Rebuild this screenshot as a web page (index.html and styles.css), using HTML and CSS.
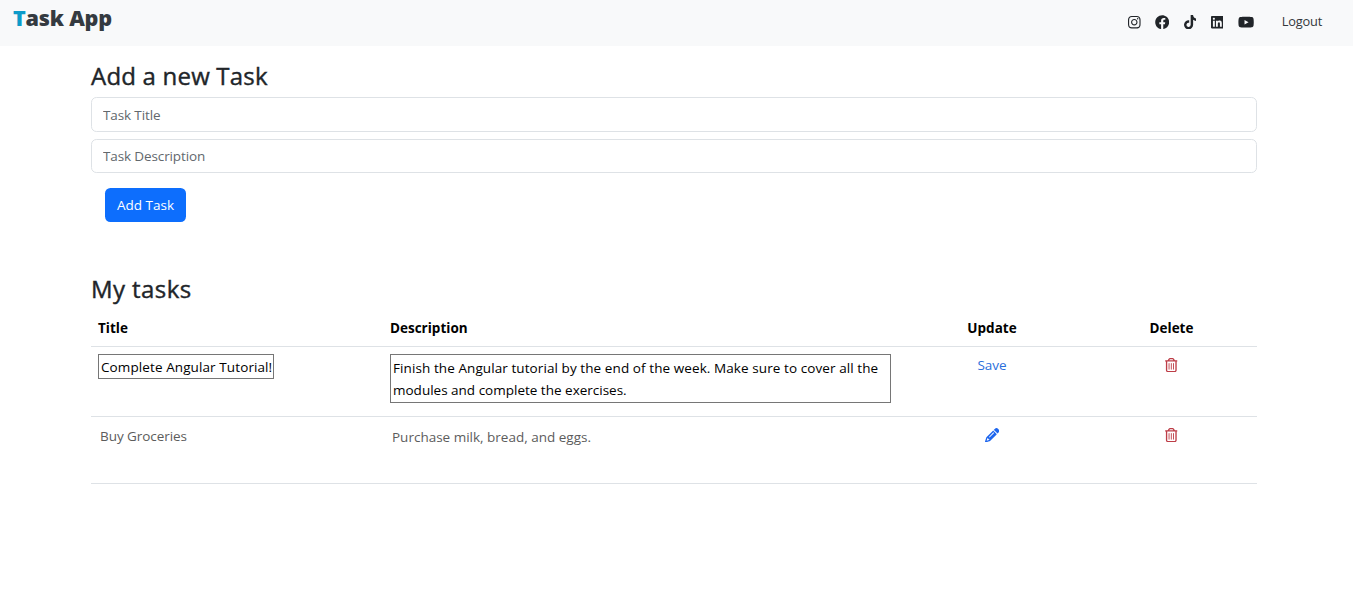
FILE: index.html
```html
<!DOCTYPE html>
<html lang="en">
<head>
<meta charset="utf-8">
<title>Task App</title>
<link rel="stylesheet" href="styles.css">
</head>
<body>
<svg class="sprite" aria-hidden="true">
  <symbol id="trash" viewBox="0 0 448 512"><path d="M170.5 51.6L151.5 80h145l-19-28.4c-1.500-2.200-4-3.600-6.700-3.600H177.100c-2.700 0-5.200 1.300-6.700 3.600zm147-26.600L354.200 80H424c13.300 0 24 10.700 24 24s-10.700 24-24 24h-8V432c0 44.200-35.800 80-80 80H112c-44.200 0-80-35.800-80-80V128H24c-13.300 0-24-10.700-24-24S10.700 80 24 80h69.800l36.700-55.100C140.900 9.400 158.400 0 177.100 0h93.700c18.700 0 36.200 9.400 46.600 24.900zM80 128V432c0 17.700 14.300 32 32 32H336c17.700 0 32-14.300 32-32V128H80zm80 64V400c0 8.800-7.200 16-16 16s-16-7.200-16-16V192c0-8.800 7.200-16 16-16s16 7.200 16 16zm80 0V400c0 8.800-7.200 16-16 16s-16-7.200-16-16V192c0-8.800 7.200-16 16-16s16 7.200 16 16zm80 0V400c0 8.800-7.200 16-16 16s-16-7.200-16-16V192c0-8.800 7.200-16 16-16s16 7.200 16 16z"/></symbol>
</svg>
<header class="navbar">
  <a class="brand"><span class="brand-initial">T</span>ask App</a>
  <nav class="nav-links">
    <svg class="icon" viewBox="0 0 448 512"><path d="M224.1 141c-63.6 0-114.9 51.3-114.9 114.9s51.3 114.9 114.9 114.9S339 319.500 339 255.900 287.700 141 224.100 141zm0 189.600c-41.100 0-74.700-33.500-74.700-74.700s33.500-74.700 74.700-74.700 74.700 33.500 74.700 74.700-33.600 74.700-74.700 74.700zm146.400-194.300c0 14.900-12 26.800-26.800 26.800-14.900 0-26.800-12-26.800-26.800s12-26.800 26.800-26.800 26.800 12 26.800 26.800zm76.100 27.200c-1.700-35.900-9.900-67.700-36.200-93.900-26.200-26.200-58-34.400-93.900-36.200-37-2.100-147.900-2.100-184.900 0-35.800 1.700-67.600 9.900-93.900 36.100s-34.400 58-36.200 93.900c-2.100 37-2.100 147.900 0 184.900 1.700 35.900 9.900 67.700 36.200 93.900s58 34.400 93.900 36.200c37 2.100 147.900 2.100 184.900 0 35.900-1.700 67.700-9.900 93.900-36.200 26.200-26.200 34.400-58 36.200-93.900 2.100-37 2.100-147.800 0-184.800zM398.800 388c-7.800 19.600-22.900 34.700-42.600 42.600-29.500 11.700-99.500 9-132.100 9s-102.700 2.600-132.100-9c-19.600-7.800-34.700-22.900-42.600-42.600-11.700-29.500-9-99.500-9-132.100s-2.600-102.700 9-132.100c7.800-19.600 22.900-34.700 42.600-42.600 29.500-11.700 99.500-9 132.100-9s102.700-2.600 132.100 9c19.600 7.800 34.700 22.900 42.600 42.600 11.700 29.500 9 99.500 9 132.100s2.700 102.700-9 132.100z"/></svg>
    <svg class="icon" viewBox="0 0 512 512"><path d="M504 256C504 119 393 8 256 8S8 119 8 256c0 123.780 90.690 226.380 209.250 245V327.690h-63V256h63v-54.640c0-62.150 37-96.480 93.670-96.480 27.140 0 55.520 4.840 55.520 4.840v61h-31.280c-30.800 0-40.410 19.120-40.410 38.730V256h68.780l-11 71.690h-57.780V501C413.310 482.380 504 379.780 504 256z"/></svg>
    <svg class="icon" viewBox="0 0 448 512"><path d="M448 209.910a210.060 210.060 0 0 1-122.770-39.250V349.380A162.550 162.550 0 1 1 185 188.310V278.200a74.620 74.620 0 1 0 52.230 71.180V0h88a121.180 121.180 0 0 0 1.860 22.170A122.180 122.180 0 0 0 381 102.390a121.430 121.430 0 0 0 67 20.140z"/></svg>
    <svg class="icon" viewBox="0 0 448 512"><path d="M416 32H31.900C14.300 32 0 46.500 0 64.300v383.400C0 465.500 14.300 480 31.900 480H416c17.600 0 32-14.500 32-32.300V64.300c0-17.800-14.400-32.300-32-32.300zM135.400 416H69V202.200h66.500V416zm-33.200-243c-21.300 0-38.500-17.300-38.500-38.500S80.900 96 102.200 96c21.200 0 38.500 17.300 38.500 38.500 0 21.300-17.200 38.500-38.500 38.500zm282.100 243h-66.400V312c0-24.800-.5-56.700-34.500-56.700-34.600 0-39.900 27-39.900 54.900V416h-66.400V202.200h63.700v29.200h.9c8.900-16.800 30.600-34.500 62.900-34.500 67.200 0 79.700 44.300 79.700 101.900V416z"/></svg>
    <svg class="icon" viewBox="0 0 576 512"><path d="M549.655 124.083c-6.281-23.650-24.787-42.276-48.284-48.597C458.781 64 288 64 288 64S117.220 64 74.629 75.486c-23.497 6.322-42.003 24.947-48.284 48.597-11.412 42.867-11.412 132.305-11.412 132.305s0 89.438 11.412 132.305c6.281 23.650 24.787 41.500 48.284 47.821C117.220 448 288 448 288 448s170.780 0 213.371-11.486c23.497-6.321 42.003-24.171 48.284-47.821 11.412-42.867 11.412-132.305 11.412-132.305s0-89.438-11.412-132.305zm-317.510 213.508V175.185l142.739 81.205-142.739 81.201z"/></svg>
    <a class="logout">Logout</a>
  </nav>
</header>
<main class="container">
  <h3 class="heading heading-add">Add a new Task</h3>
  <form class="task-form">
    <input class="field" type="text" placeholder="Task Title">
    <input class="field field-description" type="text" placeholder="Task Description">
    <button class="add-button" type="button">Add Task</button>
  </form>
  <h3 class="heading heading-list">My tasks</h3>
  <div class="table">
    <div class="row row-head">
      <div class="title-head">Title</div>
      <div class="description-head">Description</div>
      <div class="action update-head">Update</div>
      <div class="action delete-head">Delete</div>
    </div>
    <div class="row row-editing">
      <div><div class="edit edit-title">Complete Angular Tutorial!</div></div>
      <div><div class="edit edit-description"><span class="line line-one">Finish the Angular tutorial by the end of the week. Make sure to cover all the</span> <span class="line line-two">modules and complete the exercises.</span></div></div>
      <div class="action"><a class="save">Save</a></div>
      <div class="action"><svg class="icon trash"><use href="#trash"/></svg></div>
    </div>
    <div class="row row-idle">
      <div class="plain plain-title">Buy Groceries</div>
      <div class="plain plain-description">Purchase milk, bread, and eggs.</div>
      <div class="action"><svg class="icon pencil" viewBox="0 0 512 512"><path d="M410.300 231l11.300-11.300-33.900-33.900-62.100-62.100L291.700 89.800l-11.300 11.300-22.600 22.600L58.600 322.900c-10.400 10.400-18 23.300-22.200 37.400L1 480.700c-2.500 8.400-.2 17.500 6.100 23.700s15.300 8.500 23.700 6.100l120.300-35.400c14.100-4.200 27-11.800 37.400-22.200L387.700 253.700 410.300 231zM160 399.400l-9.100 22.700c-4 3.100-8.500 5.400-13.300 6.900L59.400 452l23-78.100c1.400-4.900 3.800-9.400 6.900-13.300l22.700-9.100v32c0 8.800 7.200 16 16 16h32zM362.700 18.700L348.300 33.200 325.700 55.800 314.300 67.100l33.900 33.900 62.100 62.100 33.900 33.900 11.300-11.300 22.600-22.600 14.500-14.500c25-25 25-65.500 0-90.500L453.300 18.700c-25-25-65.500-25-90.500 0zm-47.400 168l-144 144c-6.200 6.200-16.400 6.200-22.600 0s-6.200-16.400 0-22.600l144-144c6.200-6.200 16.400-6.200 22.600 0s6.200 16.400 0 22.600z"/></svg></div>
      <div class="action"><svg class="icon trash"><use href="#trash"/></svg></div>
    </div>
  </div>
</main>
</body>
</html>
```
FILE: styles.css
```css
* { box-sizing: border-box; }
body {
  margin: 0;
  background: #fff;
  color: #212529;
  font: 13.5px/22px "Segoe UI", "Open Sans", "Noto Sans", sans-serif;
}
.sprite { display: none; }
.icon { display: block; height: 14.4px; fill: currentColor; }
.navbar {
  display: flex;
  justify-content: space-between;
  height: 45.500px;
  padding: 0 31px 0 13px;
  background: #f8f9fa;
}
.brand { padding-top: 3px; font-size: 21.600px; line-height: 30px; font-weight: 800; color: #343a40; letter-spacing: -0.220px; }
.brand-initial { color: #0d9bc9; }
.nav-links { display: flex; align-items: center; gap: 14.400px; padding-bottom: 2px; }
.logout { margin-left: 13.500px; padding-bottom: 2px; font-size: 12.800px; letter-spacing: -0.200px; color: #33383c; }
.container { width: 1166px; margin: 0 0 0 91px; }
.heading { margin: 0; font-size: 24px; line-height: 30px; font-weight: 500; letter-spacing: 0.200px; -webkit-text-stroke: 0.400px currentColor; }
.heading-add { padding-top: 15px; }
.task-form { display: flex; flex-direction: column; align-items: flex-start; padding-top: 6.500px; }
.field {
  width: 100%;
  height: 35px;
  padding: 0 11px;
  border: 1px solid #dee2e6;
  border-radius: 5.400px;
  background: #fff;
  font: inherit;
  letter-spacing: -0.120px;
}
.field::placeholder { color: #62686d; opacity: 1; }
.field-description { height: 34px; margin-top: 7px; }
.add-button {
  width: 81px;
  height: 34px;
  margin: 15px 0 0 14px;
  padding: 0;
  border: 0;
  border-radius: 5.400px;
  background: #0d6efd;
  color: #fff;
  font: inherit;
}
.heading-list { margin-top: 52px; letter-spacing: 0.420px; }
.table { margin-top: 7px; }
.row {
  display: grid;
  grid-template-columns: 292px 518px 182px 174px;
  border-bottom: 1px solid #dee2e6;
}
.row > div { padding: 7px 7px 0; }
.row-head { height: 36px; font-weight: 700; color: #000; }
.row-head > div { padding-top: 6px; }
.row-editing { height: 70px; }
.row-idle { height: 67px; }
.row > .action { display: flex; flex-direction: column; align-items: center; }
.row > .action:last-child { padding-left: 10px; padding-right: 7px; }
.edit { border: 1px solid #767676; color: #000; white-space: nowrap; }
.edit-title { width: 176px; height: 25px; padding: 1px 2px; letter-spacing: 0.100px; }
.edit-description { width: 501px; height: 49px; padding: 2px; }
.line { display: block; }
.line-one { letter-spacing: 0.085px; }
.save { color: #2b6fdc; }
.trash { width: 12.600px; margin-top: 4px; color: #bd3d47; }
.pencil { width: 14.400px; margin-top: 4px; color: #1e66ee; }
.row > .plain { padding-left: 9px; padding-top: 8px; color: #5c5c5c; }
.row > .plain-title { letter-spacing: -0.060px; }
.row > .plain-description { padding-left: 9px; padding-top: 9px; }
```
